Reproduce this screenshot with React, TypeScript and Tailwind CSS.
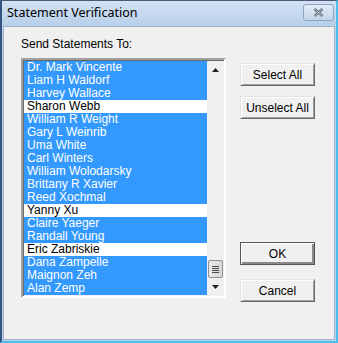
import React from 'react';

const names = [
  'Dr. Mark Vincente',
  'Liam H Waldorf',
  'Harvey Wallace',
  'Sharon Webb',
  'William R Weight',
  'Gary L Weinrib',
  'Uma White',
  'Carl Winters',
  'William Wolodarsky',
  'Brittany R Xavier',
  'Reed Xochmal',
  'Yanny Xu',
  'Claire Yaeger',
  'Randall Young',
  'Eric Zabriskie',
  'Dana Zampelle',
  'Maignon Zeh',
  'Alan Zemp',
];

const unselected = ['Sharon Webb', 'Yanny Xu', 'Eric Zabriskie'];

function WinButton({ label, isDefault }: { label: string; isDefault?: boolean }) {
  return (
    <div
      className={
        'w-[75px] h-[23px] flex items-center justify-center bg-[#f0f0f0] text-[12px] text-black ' +
        (isDefault
          ? 'border border-[#555555] shadow-[inset_1px_1px_0_#ffffff,inset_-2px_-2px_0_#8a8a8a]'
          : 'border border-t-[#e3e3e3] border-l-[#e3e3e3] border-r-[#6a6a6a] border-b-[#6a6a6a] shadow-[inset_1px_1px_0_#ffffff,inset_-1px_-1px_0_#a0a0a0]')
      }
    >
      {label}
    </div>
  );
}

export default function App() {
  return (
    <div
      className="w-[338px] h-[343px] flex flex-col bg-[#bcd2ea] border-l-2 border-l-[#33557f] border-r-2 border-r-[#4cc0ec] border-b-2 border-b-[#4cc0ec] border-t border-t-[#4a5a70] overflow-hidden"
      style={{ fontFamily: '"Liberation Sans", Arial, sans-serif' }}
    >
      <div className="h-[25px] shrink-0 flex items-center justify-between pl-[5px] pr-[2px] bg-gradient-to-b from-[#d3e2f3] to-[#b8cfe9]">
        <span className="text-[12.5px] text-black" style={{ fontFamily: '"Noto Sans", "Open Sans", sans-serif' }}>
          Statement Verification
        </span>
        <div className="w-[31px] h-[17px] mb-[2px] rounded-[3px] border border-[#8aa3c2] bg-gradient-to-b from-[#e2ebf6] to-[#c4d6ec] flex items-center justify-center">
          <svg width="11" height="9" viewBox="0 0 11 9">
            <path d="M1.5 1 L9.5 8 M9.5 1 L1.5 8" stroke="#5a6470" strokeWidth="2.4" />
            <path d="M1.5 1 L9.5 8 M9.5 1 L1.5 8" stroke="#e8eef5" strokeWidth="0.8" />
          </svg>
        </div>
      </div>
      <div className="flex-1 mx-[1px] mb-[1px] bg-[#f0f0f0] border border-[#9fb4cc] pl-[17px] pt-[10px] flex flex-col">
        <div className="text-[12px] text-black leading-[14px]">Send Statements To:</div>
        <div className="flex mt-[7px]">
          <div className="w-[205px] h-[240px] border-2 border-t-[#a0a0a0] border-l-[#a0a0a0] border-r-[#ffffff] border-b-[#ffffff] shadow-[inset_1px_1px_0_#696969] flex pl-[1px] pt-[1px]">
            <div className="w-[185px] flex flex-col">
              {names.map(n => {
                const sel = !unselected.includes(n);
                return (
                  <div
                    key={n}
                    className={
                      'h-[13px] leading-[13px] text-[12px] pl-[3px] whitespace-nowrap ' +
                      (sel ? 'bg-[#3399ff] text-white' : 'bg-white text-black')
                    }
                  >
                    {n}
                  </div>
                );
              })}
            </div>
            <div className="w-[17px] h-[234px] bg-[#f0f0f0] flex flex-col items-center">
              <div className="h-[17px] w-full flex items-center justify-center">
                <svg width="7" height="4" viewBox="0 0 7 4">
                  <path d="M3.5 0 L7 4 L0 4 Z" fill="#222" />
                </svg>
              </div>
              <div className="flex-1" />
              <div className="w-[15px] h-[18px] rounded-[2px] border border-[#8e8f8f] bg-gradient-to-r from-[#eaeaea] to-[#d6d6d6] flex flex-col items-center justify-center gap-[1px]">
                <div className="w-[7px] h-[1px] bg-[#4a4a4a]" />
                <div className="w-[7px] h-[1px] bg-[#4a4a4a]" />
                <div className="w-[7px] h-[1px] bg-[#4a4a4a]" />
                <div className="w-[7px] h-[1px] bg-[#4a4a4a]" />
              </div>
              <div className="h-[17px] w-full flex items-center justify-center">
                <svg width="7" height="4" viewBox="0 0 7 4">
                  <path d="M0 0 L7 0 L3.5 4 Z" fill="#222" />
                </svg>
              </div>
            </div>
          </div>
          <div className="ml-[14px] flex flex-col">
            <div className="mt-[5px] flex flex-col gap-[10px]">
              <WinButton label="Select All" />
              <WinButton label="Unselect All" />
            </div>
            <div className="mt-[123px] flex flex-col gap-[14px]">
              <WinButton label="OK" isDefault />
              <WinButton label="Cancel" />
            </div>
          </div>
        </div>
      </div>
    </div>
  );
}
